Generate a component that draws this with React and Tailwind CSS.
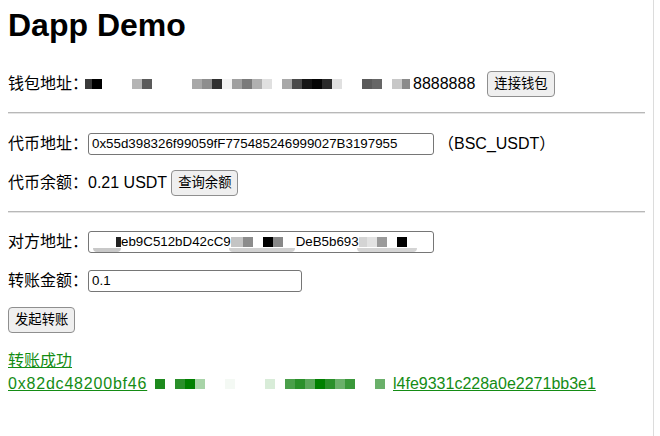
import React from "react"

const font = { fontFamily: '"Liberation Sans", Arial, "Noto Sans CJK SC", sans-serif' }

// redacted wallet address blocks: [width, color] from x=88
const walletBlocks = [
  [7, "#3a3a3a"], [10, "#000000"], [30, "transparent"], [10, "#b5b5b5"], [10, "#5a5a5a"],
  [40, "transparent"], [10, "#a8a8a8"], [10, "#8e8e8e"], [10, "#2f2f2f"], [10, "#f3f3f3"],
  [10, "#a0a0a0"], [10, "#7a7a7a"], [10, "#b0b0b0"], [10, "#e0e0e0"], [10, "transparent"],
  [10, "#a8a8a8"], [10, "#4a4a4a"], [10, "#151515"], [10, "#050505"], [10, "#2a2a2a"],
  [10, "#e0e0e0"], [20, "transparent"], [10, "#5a5a5a"], [10, "#666666"], [10, "transparent"],
  [10, "#c8c8c8"], [8, "#8a8a8a"],
]

// redacted tx hash blocks from x=149
const txBlocks = [
  [6, "transparent"], [10, "#1e8a1e"], [10, "transparent"], [10, "#2a8f2a"], [10, "#008000"],
  [10, "#a8d4a8"], [20, "transparent"], [10, "#f4f9f4"], [30, "transparent"], [10, "#d8ecd8"],
  [10, "transparent"], [10, "#4a9f4a"], [10, "#2a902a"], [10, "#5aa75a"], [10, "#008000"],
  [10, "#2a902a"], [10, "#6ab06a"], [10, "#3a983a"], [20, "transparent"], [10, "#6ab06a"],
  [8, "transparent"],
]

const Mosaic = ({ blocks }) => (
  <span className="inline-flex h-[10px] items-stretch">
    {blocks.map(([w, c], i) => (
      <span key={i} style={{ width: w, background: c }} />
    ))}
  </span>
)

const Button = ({ children, className = "" }) => (
  <button
    className={`h-[26px] rounded-[4px] border border-[#8f8f8f] bg-[#efefef] px-[6px] text-[13.33px] leading-none text-black ${className}`}
  >
    {children}
  </button>
)

const Input = ({ className = "", children, value }) => (
  <div
    className={`flex h-[22px] items-center overflow-hidden rounded-[3px] border border-[#767676] bg-white px-[3px] text-[13.33px] text-black ${className}`}
  >
    {children || value}
  </div>
)

const Rule = () => <div className="h-[2px] w-full border-t border-[#b8b8b8] bg-[#e4e4e4]" />

export default function App() {
  return (
    <div className="flex h-[436px] w-[660px] overflow-hidden bg-white text-black" style={font}>
      <div className="w-[653px] px-2 pt-[7px] text-[16px]">
        <h1 className="h-[37px] text-[32px] font-bold leading-[37px]">Dapp Demo</h1>

        <div className="mt-[27px] flex h-[26px] items-center whitespace-nowrap">
          <span>钱包地址：</span>
          <span className="-ml-[3px] flex w-[328px]">
            <Mosaic blocks={walletBlocks} />
          </span>
          <span>8888888</span>
          <Button className="ml-[12px]">连接钱包</Button>
        </div>

        <div className="mt-[15px]">
          <Rule />
        </div>

        <div className="mt-[17px] flex h-[26px] items-center whitespace-nowrap">
          <span>代币地址：</span>
          <Input className="w-[346px]" value="0x55d398326f99059fF775485246999027B3197955" />
          <span className="ml-[4px]">（BSC_USDT）</span>
        </div>

        <div className="mt-[13px] flex h-[26px] items-center whitespace-nowrap">
          <span>代币余额：0.21 USDT</span>
          <Button className="ml-[4px]">查询余额</Button>
        </div>

        <div className="mt-[15px]">
          <Rule />
        </div>

        <div className="mt-[16px] flex h-[26px] items-center whitespace-nowrap">
          <span>对方地址：</span>
          <Input className="relative w-[346px]">
            <span className="ml-[24px] inline-block h-[10px] w-[5px] bg-[#222]" />
            <span>eb9C512bD42cC9</span>
            <span className="inline-block h-[10px] w-[12px] bg-[#c4c4c4]" />
            <span className="inline-block h-[10px] w-[10px] bg-[#8c8c8c]" />
            <span className="inline-block h-[10px] w-[10px]" />
            <span className="inline-block h-[10px] w-[10px] bg-black" />
            <span className="inline-block h-[10px] w-[10px] bg-[#888]" />
            <span className="inline-block w-[13px]" />
            <span>DeB5b693</span>
            <span className="inline-block h-[10px] w-[8px] bg-[#d4d4d4]" />
            <span className="inline-block h-[10px] w-[10px] bg-[#e2e2e2]" />
            <span className="inline-block h-[10px] w-[10px] bg-[#9a9a9a]" />
            <span className="inline-block h-[10px] w-[10px]" />
            <span className="inline-block h-[10px] w-[10px] bg-black" />
            <span className="absolute bottom-0 left-[4px] h-[4px] w-[28px] rounded-b-full bg-[#c8c8c8]" />
            <span className="absolute bottom-0 left-[140px] h-[4px] w-[66px] rounded-b-full bg-[#d0d0d0]" />
            <span className="absolute bottom-0 left-[268px] h-[4px] w-[60px] rounded-b-full bg-[#d4d4d4]" />
          </Input>
        </div>

        <div className="mt-[13px] flex h-[26px] items-center whitespace-nowrap">
          <span>转账金额：</span>
          <Input className="w-[214px]" value="0.1" />
        </div>

        <div className="mt-[13px] flex h-[26px] items-center">
          <Button>发起转账</Button>
        </div>

        <div className="mt-[16px] leading-[23px] text-[#148c14]">
          <div>
            <a className="underline">转账成功</a>
          </div>
          <div className="flex items-center whitespace-nowrap">
            <span className="inline-block w-[141px]">
              <a className="underline tracking-[0.8px]">0x82dc48200bf46</a>
            </span>
            <Mosaic blocks={txBlocks} />
            <a className="underline">l4fe9331c228a0e2271bb3e1</a>
          </div>
        </div>
      </div>
      <div className="h-full w-[7px] border-l border-[#dcdcdc] bg-white" />
    </div>
  )
}
